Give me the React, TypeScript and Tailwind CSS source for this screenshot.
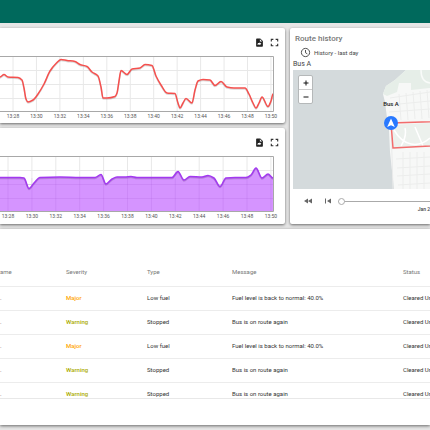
import { ReactNode } from "react";

type Chart = {
  id: string;
  stroke: string;
  fill?: string;
  firstTick: number;
  step: number;
  points: [number, number][];
};

const times = ["13:28", "13:30", "13:32", "13:34", "13:36", "13:38", "13:40", "13:42", "13:44", "13:46", "13:48", "13:50"];

// points are in chart pixels, y = 0 is the top of the plot
const fuel: Chart = {
  id: "fuel",
  stroke: "#f5504e",
  firstTick: 13,
  step: 23.45,
  points: [
    [0, 21], [4, 18.5], [8, 21], [18, 21.5], [22, 24], [24, 32], [26, 43], [28, 46], [33, 44], [38, 38], [44, 28], [50, 15], [56, 7.5], [61, 3.5], [67, 4.5], [75, 5.5], [80, 8.5], [87, 10.5], [92, 16], [98, 20], [101, 31], [103, 42], [107, 42], [115, 40.5], [117, 37], [119, 25], [121, 14.5], [127, 18.5], [132, 13], [140, 12], [145, 8.5], [152, 9.5], [156, 20], [161, 29], [167, 37], [175, 37.5], [178, 47], [180, 52], [183, 47], [186, 42.5], [192, 47], [195, 34], [198, 25], [203, 23.5], [210, 24], [215, 29.5], [221, 25.5], [227, 31], [234, 32], [245, 32], [249, 38], [253, 47], [256, 52], [259, 47], [262, 41], [268, 50.5], [271, 45], [273, 38],
  ],
};

const speed: Chart = {
  id: "speed",
  stroke: "#a238f0",
  fill: "#d594ff",
  firstTick: 8,
  step: 23.9,
  points: [
    [0, 21.5], [20, 21.5], [24, 22], [29, 32.5], [34, 27], [40, 21.5], [60, 21], [80, 21.5], [95, 21.5], [101, 18.5], [106, 28], [112, 23], [117, 21], [125, 21], [131, 20.5], [137, 21.5], [150, 21.5], [172, 21.5], [178, 15.5], [184, 24], [190, 20.5], [202, 21], [208, 19.5], [214, 22], [220, 30.5], [226, 22], [235, 21.5], [246, 21.5], [251, 19], [256, 12], [262, 22], [268, 18], [273, 22],
  ],
};

const alarms = [
  { severity: "Major", type: "Low fuel", message: "Fuel level is back to normal: 40.0%" },
  { severity: "Warning", type: "Stopped", message: "Bus is on route again" },
  { severity: "Major", type: "Low fuel", message: "Fuel level is back to normal: 40.0%" },
  { severity: "Warning", type: "Stopped", message: "Bus is on route again" },
  { severity: "Warning", type: "Stopped", message: "Bus is on route again" },
];

// monotone horizontal easing between samples keeps the line smooth
function linePath(points: [number, number][]) {
  const slopes = points.map((p, i) => {
    const a = points[i - 1];
    const b = points[i + 1];
    if (!a || !b) return 0;
    const left = (p[1] - a[1]) / (p[0] - a[0]);
    const right = (b[1] - p[1]) / (b[0] - p[0]);
    return left * right <= 0 ? 0 : (2 * left * right) / (left + right);
  });
  return points
    .map(([x, y], i) => {
      if (i === 0) return `M${x} ${y}`;
      const [px, py] = points[i - 1];
      const d = (x - px) / 3;
      return `C${px + d} ${py + slopes[i - 1] * d} ${x - d} ${y - slopes[i] * d} ${x} ${y}`;
    })
    .join("");
}

function Card({ className = "", children }: { className?: string; children: ReactNode }) {
  return (
    <section className={`min-w-0 overflow-hidden bg-white shadow-[0_1px_3px_rgba(0,0,0,0.55)] ${className}`}>
      {children}
    </section>
  );
}

function ChartCard({ chart }: { chart: Chart }) {
  const line = linePath(chart.points);
  return (
    <Card className="rounded-r-xs">
      <div className="flex h-7 items-center justify-end gap-1.5 pr-1.5">
        <button aria-label="Export" className="text-[#222]">
          <svg viewBox="0 0 24 24" className="size-[9px]" fill="currentColor">
            <path
              fillRule="evenodd"
              d="M14 1H5a2 2 0 0 0-2 2v18a2 2 0 0 0 2 2h14a2 2 0 0 0 2-2V8l-7-7zm-1 8V3l6 6h-6zm-6 10v-3c0-2 1-3 3-3h2v-2l5 4-5 4v-2h-2c-1.500 0-2.500 1-3 2z"
            />
          </svg>
        </button>
        <button aria-label="Fullscreen" className="text-[#333]">
          <svg viewBox="0 0 24 24" className="size-[9px]" fill="currentColor">
            <path d="M5 15H2v7h7v-3H5v-4zM2 9h3V5h4V2H2v7zm17 10h-4v3h7v-7h-3v4zM15 2v3h4v4h3V2h-7z" />
          </svg>
        </button>
      </div>
      <div className="flex justify-end pr-1">
        <svg width="281" height="67" className="shrink-0 font-[Roboto,sans-serif]" role="img" aria-label={chart.id}>
          <g stroke="#e8e8e8" strokeWidth="1">
            {times.map((t, i) => (
              <line key={t} x1={chart.firstTick + i * chart.step} x2={chart.firstTick + i * chart.step} y1="0" y2="55" />
            ))}
            {[14.5, 28.5, 42.5].map((y) => (
              <line key={y} x1="0" x2="273" y1={y} y2={y} />
            ))}
          </g>
          {chart.fill && <path d={`${line}L273 55L0 55Z`} fill={chart.fill} />}
          {chart.fill && (
            <g stroke="#9545c8" strokeOpacity="0.14">
              {times.map((t, i) => (
                <line key={t} x1={chart.firstTick + i * chart.step} x2={chart.firstTick + i * chart.step} y1="22" y2="55" />
              ))}
              <line x1="0" x2="273" y1="28.5" y2="28.5" />
              <line x1="0" x2="273" y1="42.5" y2="42.5" />
            </g>
          )}
          <path d="M0 .5H273.500V55.500H0" fill="none" stroke="#a8a8a8" />
          <path d={line} transform="translate(0 1)" fill="none" stroke="#000" strokeOpacity="0.15" strokeWidth="1.500" />
          <path d={line} fill="none" stroke={chart.stroke} strokeWidth="1.500" strokeLinejoin="round" />
          <g fill="#555" fontSize="5" textAnchor="middle">
            {times.map((t, i) => (
              <text key={t} x={chart.firstTick + i * chart.step} y="62">
                {t}
              </text>
            ))}
          </g>
        </svg>
      </div>
    </Card>
  );
}

function RouteMap() {
  return (
    <div className="relative ml-[3px] h-[119px] overflow-hidden bg-[#d4dadc]">
      <svg width="320" height="119" className="block" aria-hidden="true">
        <path d="M113 0L102 10L93 16L90 24L92 32L94 48L96 60L97 82L101 119H320V0Z" fill="#f7f8f7" />
        <path d="M113 0L102 10L93 16L90 24L94 26L104 22L106 13H118V20L137 18V0Z" fill="#e6eee8" />
        <path d="M99 55L137 53V76L101 79Z" fill="#ecf1ed" />
        <g stroke="#ecedec" fill="none">
          <path d="M97 28L137 22M96 35L137 31M96 42L137 39M106 24L108 50M113 23L115 50M120 22L122 49M127 21L129 49M134 20L136 48" />
          <path d="M103 89L137 87M104 98L137 96M104 106L137 104M105 115L137 113M110 82V119M117 82V119M124 82V119M131 82V119" />
        </g>
        <path d="M101 60Q108 72 118 74T137 68M108 76Q114 66 112 58M122 57L130 76" fill="none" stroke="#fff" strokeWidth="1.500" />
        <path d="M128 0Q128 12 137 13" fill="none" stroke="#f9fbf9" strokeWidth="1.500" />
        <path d="M98 53L100 119" stroke="#e9eaea" />
        <path d="M320 46L98 53L100 78L320 66" fill="none" stroke="#f26d6d" strokeWidth="1.500" />
      </svg>
      <div className="absolute top-[5px] left-[5px] grid rounded-xs border border-[#b5b8b9] bg-white text-[#111]">
        <button aria-label="Zoom in" className="flex h-[14px] w-[13px] items-center justify-center border-b border-[#ccc]">
          <svg viewBox="0 0 6 6" className="size-1.5" stroke="currentColor"><path d="M3 .5V5.500M.5 3H5.500" /></svg>
        </button>
        <button aria-label="Zoom out" className="flex h-[13px] w-[13px] items-center justify-center">
          <svg viewBox="0 0 6 6" className="size-1.5" stroke="currentColor"><path d="M.5 3H5.500" /></svg>
        </button>
      </div>
      <div className="absolute top-[30px] left-[88px] grid w-5 justify-items-center gap-2">
        <span className="text-[6px] leading-2 font-medium whitespace-nowrap text-[#222]">Bus A</span>
        <svg viewBox="0 0 14 14" className="size-[14px]">
          <circle cx="7" cy="7" r="7" fill="#2979ff" />
          <path d="M7 2.500L10.800 11L7 9.300L3.200 11Z" fill="#fff" />
        </svg>
      </div>
    </div>
  );
}

function RouteCard() {
  return (
    <Card className="row-span-2 rounded-l-xs text-[#444]">
      <h2 className="pt-1.5 pl-[5px] text-[8px] leading-[10px] font-medium text-[#777]">Route history</h2>
      <button className="ml-2.5 flex h-4 items-center gap-[3px] text-[6px] whitespace-nowrap">
        <svg viewBox="0 0 24 24" className="size-[11px]" fill="none" stroke="currentColor" strokeWidth="2">
          <circle cx="12" cy="12" r="9" />
          <path d="M12 6.500V12.500L16 15" />
        </svg>
        History - last day
      </button>
      <p className="pb-px pl-[3px] text-[7px] leading-[9px]">Bus A</p>
      <RouteMap />
      <div className="flex h-6 items-center pl-[13px] text-[#666]">
        <button aria-label="Rewind">
          <svg viewBox="0 0 10 6" className="h-1.5 w-2.5" fill="currentColor"><path d="M5 .5V5.500L1 3ZM9 .5V5.500L5 3Z" /></svg>
        </button>
        <button aria-label="Previous" className="ml-[11px]">
          <svg viewBox="0 0 8 6" className="h-1.5 w-2" fill="currentColor"><path d="M1 .5H2V5.500H1ZM7 .5V5.500L3 3Z" /></svg>
        </button>
        <input
          type="range"
          aria-label="Timeline"
          defaultValue={0}
          className="ml-1.5 h-2 min-w-0 flex-1 appearance-none bg-[linear-gradient(#aaa,#aaa)] bg-[length:100%_1px] bg-center bg-no-repeat [&::-webkit-slider-thumb]:size-[7px] [&::-webkit-slider-thumb]:appearance-none [&::-webkit-slider-thumb]:rounded-full [&::-webkit-slider-thumb]:border [&::-webkit-slider-thumb]:border-[#aaa] [&::-webkit-slider-thumb]:bg-white"
        />
      </div>
      <p className="-mt-2 text-right text-[5px] leading-2 font-medium whitespace-nowrap">Jan 2</p>
    </Card>
  );
}

function AlarmsTable() {
  return (
    <Card className="col-span-2 pt-[29px]">
      <div className="h-[141px] overflow-hidden border-b border-[#e8e8e8]">
        <table className="w-full table-fixed border-collapse text-left text-[6px] leading-2 whitespace-nowrap text-[#333]">
          <colgroup>
            <col className="w-[66px]" />
            <col className="w-[81px]" />
            <col className="w-[85px]" />
            <col className="w-[171px]" />
            <col />
          </colgroup>
          <thead>
            <tr className="h-7 text-[#777]">
              <th className="font-normal">ame</th>
              <th className="font-normal">Severity</th>
              <th className="font-normal">Type</th>
              <th className="font-normal">Message</th>
              <th className="font-normal">Status</th>
            </tr>
          </thead>
          <tbody>
            {alarms.map((alarm, i) => (
              <tr key={i} className="h-6 border-t border-[#ececec]">
                <td>.</td>
                <td className={`font-medium ${alarm.severity === "Major" ? "text-[#ffa500]" : "text-[#abab00]"}`}>
                  {alarm.severity}
                </td>
                <td>{alarm.type}</td>
                <td>{alarm.message}</td>
                <td>Cleared Un</td>
              </tr>
            ))}
          </tbody>
        </table>
      </div>
    </Card>
  );
}

export default function App() {
  return (
    <div className="min-h-screen overflow-hidden bg-[#e6e6e6] font-[Roboto,'Noto_Sans',sans-serif]">
      <header className="h-[23px] bg-[#00695c]" />
      <main className="grid grid-cols-[57fr_28fr] grid-rows-[95px_96px_196px] gap-[5px] py-[5px]">
        <ChartCard chart={fuel} />
        <RouteCard />
        <ChartCard chart={speed} />
        <AlarmsTable />
      </main>
    </div>
  );
}
